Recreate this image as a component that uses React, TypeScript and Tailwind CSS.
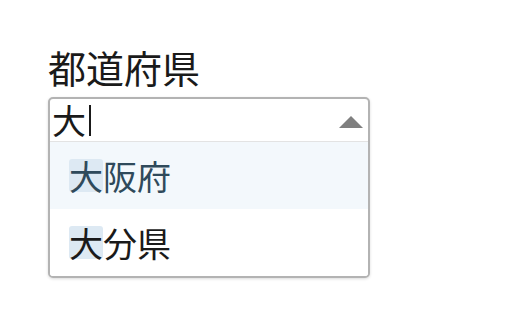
import { useState } from "react";

const options = [
  { id: "osaka", rest: "阪府" },
  { id: "oita", rest: "分県" },
];

export default function App() {
  const [active] = useState("osaka");
  const font = { fontFamily: '"Noto Sans CJK JP", "Noto Sans", sans-serif' };

  return (
    <div className="w-[512px] h-[320px] bg-white pl-[48px] pt-[44px]" style={font}>
      <div className="text-[38px] leading-[46px] text-[#1a1a1a]">都道府県</div>
      <div className="mt-[7px] w-[322px] rounded-[5px] border-2 border-[#b3b3b3] bg-white shadow-[0_1px_3px_rgba(0,0,0,0.15)]">
        <div className="flex h-[43px] items-center justify-between pl-[2px] pr-[5px] border-b border-[#e3e3e3]">
          <div className="flex items-center text-[34px] leading-[40px] text-[#1a1a1a]">
            <span>大</span>
            <span className="ml-[3px] h-[31px] w-[1.5px] bg-[#1a1a1a]" />
          </div>
          <svg width="24" height="12" viewBox="0 0 24 12" className="mt-[4px]">
            <polygon points="12,0 24,12 0,12" fill="#7f7f7f" />
          </svg>
        </div>
        {options.map((o) => (
          <div
            key={o.id}
            className={
              "flex h-[67px] items-center pl-[19px] text-[34px] leading-none last:rounded-b-[3px] " +
              (o.id === active ? "bg-[#f3f8fc] text-[#2f4a5b]" : "bg-white text-[#1a1a1a]")
            }
          >
            <span className="inline-flex h-[33px] items-center rounded-[3px] bg-[#dde9f3]">大</span>
            <span>{o.rest}</span>
          </div>
        ))}
      </div>
    </div>
  );
}
